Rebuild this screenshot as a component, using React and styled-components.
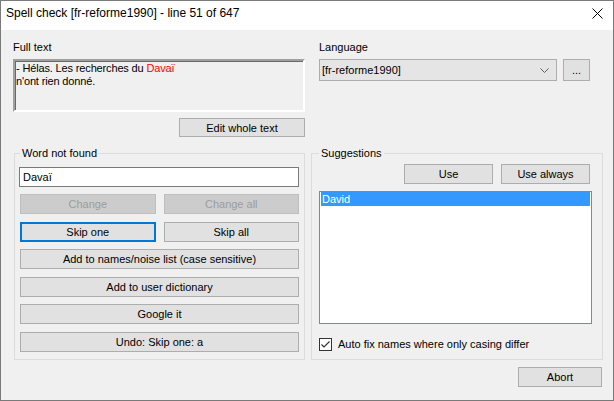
import styled, { createGlobalStyle } from "styled-components";

const GlobalStyle = createGlobalStyle`
  html, body {
    margin: 0;
    padding: 0;
    background: #f0f0f0;
  }
  body {
    font-family: "Liberation Sans", Arial, sans-serif;
    font-size: 11px;
    color: #000;
  }
`;

const Window = styled.div`
  width: 614px;
  height: 401px;
  box-sizing: border-box;
  border: 1px solid #7a7a7a;
  background: #f0f0f0;
  display: flex;
  flex-direction: column;
`;

const TitleBar = styled.div`
  height: 29px;
  flex: 0 0 29px;
  background: #fff;
  display: flex;
  align-items: flex-start;
  justify-content: space-between;
  padding: 5px 10px 0 5px;
  box-sizing: border-box;
  font-size: 12px;
  line-height: 15px;
`;

const CloseIcon = styled.svg`
  margin-top: 2px;
`;

const Body = styled.div`
  flex: 1;
  display: flex;
  flex-direction: column;
  padding: 11px 10px 0 11px;
`;

const TwoCols = styled.div`
  display: grid;
  grid-template-columns: 293px 292px;
  column-gap: 6px;
`;

const Column = styled.div`
  display: flex;
  flex-direction: column;
  padding-left: ${(p) => p.$inset || 0}px;
`;

const FieldLabel = styled.div`
  line-height: 13px;
  height: 13px;
  margin-bottom: 5px;
  padding-left: 1px;
`;

const FullText = styled.div`
  height: 53px;
  margin-left: 1px;
  box-sizing: border-box;
  border: 2px solid;
  border-color: #a0a0a0 #ffffff #ffffff #a0a0a0;
  box-shadow: inset 1px 1px 0 #696969;
  padding: 1px 1px;
  line-height: 13px;
  background: #f0f0f0;
  letter-spacing: -0.15px;
`;

const Missing = styled.span`
  color: #ff0000;
`;

const Button = styled.button`
  height: ${(p) => p.$h || 20}px;
  width: ${(p) => (p.$w ? `${p.$w}px` : "auto")};
  box-sizing: border-box;
  margin: 0;
  padding: 0;
  font-family: inherit;
  font-size: 11px;
  color: #000;
  background: #e1e1e1;
  border: 1px solid #adadad;
  border-radius: 0;
  outline: none;

  &:disabled {
    background: #cccccc;
    border-color: #bfbfbf;
    color: #9c9c9c;
  }

  ${(p) =>
    p.$focused &&
    `
    border: 2px solid #0078d7;
  `}
`;

const EditButton = styled(Button)`
  align-self: flex-end;
  margin-top: 6px;
`;

const ComboRow = styled.div`
  display: flex;
  gap: 6px;
  margin-left: 1px;
`;

const Combo = styled.div`
  width: 238px;
  height: 22px;
  box-sizing: border-box;
  border: 1px solid #adadad;
  background: #e5e5e5;
  display: flex;
  align-items: center;
  justify-content: space-between;
  padding: 0 7px 0 2px;
`;

const GroupsRow = styled(TwoCols)`
  margin-top: 9px;
`;

const Group = styled.fieldset`
  margin: 0 0 0 ${(p) => p.$shift || 0}px;
  min-width: 0;
  padding: 4px ${(p) => p.$right || 5}px 7px ${(p) => p.$left || 5}px;
  border: 1px solid #dcdcdc;
  display: flex;
  flex-direction: column;

  & > legend {
    padding: 0 2px;
    line-height: 14px;
  }
`;

const WordInput = styled.input`
  margin: 3px 0 0 -1px;
  height: 20px;
  box-sizing: border-box;
  border: 1px solid #7a7a7a;
  background: #fff;
  font-family: inherit;
  font-size: 11px;
  padding: 0 3px;
  outline: none;
`;

const ButtonStack = styled.div`
  display: flex;
  flex-direction: column;
  gap: 7.6px;
  margin-top: 7px;
`;

const PairRow = styled.div`
  display: grid;
  grid-template-columns: 1fr 1fr;
  column-gap: 8px;
`;

const UseRow = styled.div`
  display: flex;
  justify-content: flex-end;
  gap: 8px;
  padding-right: 2px;
`;

const ListBox = styled.div`
  margin-top: 7px;
  height: 133px;
  box-sizing: border-box;
  border: 1px solid #828790;
  background: #fff;
  padding: 0 1px;
`;

const ListItem = styled.div`
  line-height: 14px;
  padding-left: 1px;
  background: ${(p) => (p.$selected ? "#3399ff" : "transparent")};
  color: ${(p) => (p.$selected ? "#fff" : "#000")};
`;

const CheckRow = styled.label`
  display: flex;
  align-items: center;
  gap: 6px;
  margin-top: 14px;
  line-height: 13px;
`;

const CheckBox = styled.span`
  width: 13px;
  height: 13px;
  box-sizing: border-box;
  border: 1px solid #333;
  background: #fff;
  display: flex;
  align-items: center;
  justify-content: center;
`;

const Footer = styled.div`
  display: flex;
  justify-content: flex-end;
  margin-top: 7px;
  padding-right: 1px;
`;

export default function App() {
  return (
    <>
      <GlobalStyle />
      <Window>
        <TitleBar>
          <span>Spell check [fr-reforme1990] - line 51 of 647</span>
          <CloseIcon width="11" height="11" viewBox="0 0 11 11">
            <path d="M0.5 0.5 L10.5 10.5 M10.5 0.5 L0.5 10.5" stroke="#000" strokeWidth="1" fill="none" />
          </CloseIcon>
        </TitleBar>
        <Body>
          <TwoCols>
            <Column>
              <FieldLabel>Full text</FieldLabel>
              <FullText>
                - Hélas. Les recherches du <Missing>Davaï</Missing>
                <br />
                n'ont rien donné.
              </FullText>
              <EditButton $w={126} $h={19}>Edit whole text</EditButton>
            </Column>
            <Column $inset={7}>
              <FieldLabel>Language</FieldLabel>
              <ComboRow>
                <Combo>
                  <span>[fr-reforme1990]</span>
                  <svg width="9" height="5" viewBox="0 0 9 5">
                    <path d="M0.5 0.5 L4.5 4.5 L8.5 0.5" stroke="#606060" strokeWidth="1" fill="none" />
                  </svg>
                </Combo>
                <Button $w={27} $h={22}>...</Button>
              </ComboRow>
            </Column>
          </TwoCols>

          <GroupsRow>
            <Group $shift={2}>
              <legend>Word not found</legend>
              <WordInput defaultValue="Davaï" />
              <ButtonStack>
                <PairRow>
                  <Button disabled>Change</Button>
                  <Button disabled>Change all</Button>
                </PairRow>
                <PairRow>
                  <Button $focused>Skip one</Button>
                  <Button>Skip all</Button>
                </PairRow>
                <Button>Add to names/noise list (case sensitive)</Button>
                <Button>Add to user dictionary</Button>
                <Button>Google it</Button>
                <Button>Undo: Skip one: a</Button>
              </ButtonStack>
            </Group>
            <Group $left={7} $right={10}>
              <legend>Suggestions</legend>
              <UseRow>
                <Button $w={89}>Use</Button>
                <Button $w={89}>Use always</Button>
              </UseRow>
              <ListBox>
                <ListItem $selected>David</ListItem>
              </ListBox>
              <CheckRow>
                <CheckBox>
                  <svg width="11" height="11" viewBox="0 0 11 11">
                    <path d="M1.5 5.5 L4 8 L9.5 2.5" stroke="#333" strokeWidth="1.2" fill="none" />
                  </svg>
                </CheckBox>
                Auto fix names where only casing differ
              </CheckRow>
            </Group>
          </GroupsRow>

          <Footer>
            <Button $w={84}>Abort</Button>
          </Footer>
        </Body>
      </Window>
    </>
  );
}
